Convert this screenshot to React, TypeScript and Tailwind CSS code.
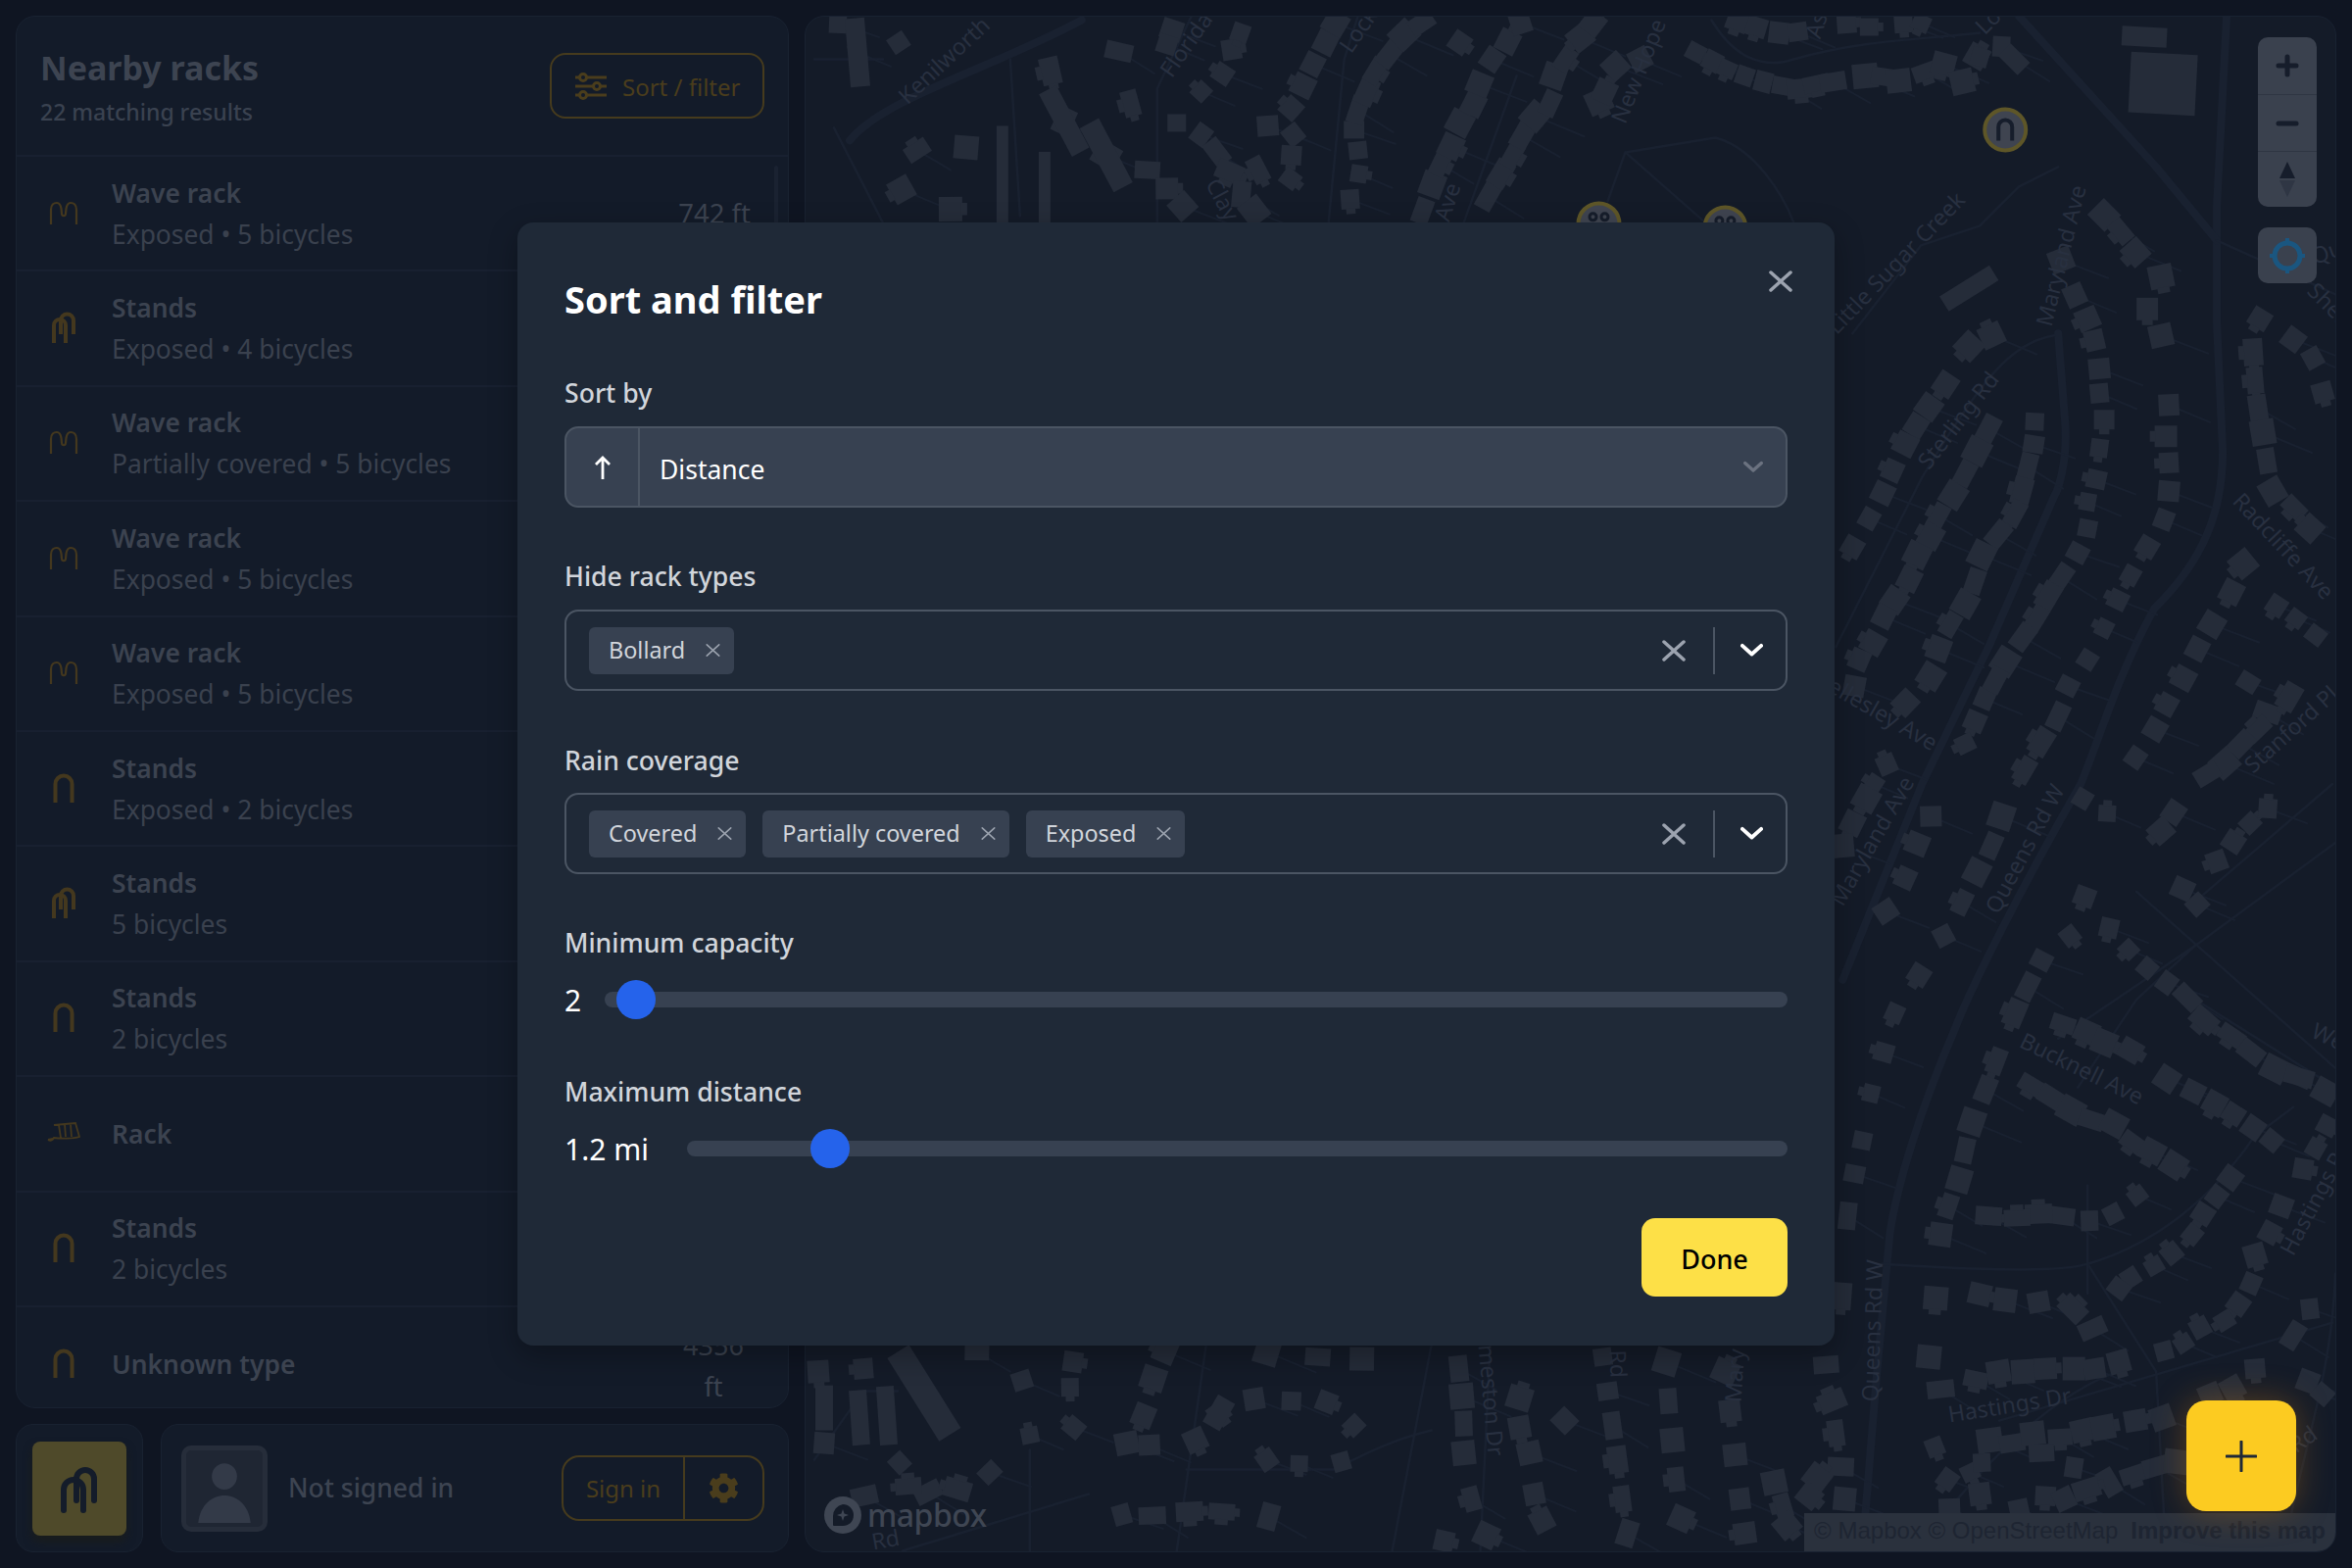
import { FaCog } from "react-icons/fa";

type RackKind = "wave" | "double" | "single" | "rack";

const racks: { kind: RackKind; title: string; sub?: string }[] = [
  { kind: "wave", title: "Wave rack", sub: "Exposed • 5 bicycles" },
  { kind: "double", title: "Stands", sub: "Exposed • 4 bicycles" },
  { kind: "wave", title: "Wave rack", sub: "Partially covered • 5 bicycles" },
  { kind: "wave", title: "Wave rack", sub: "Exposed • 5 bicycles" },
  { kind: "wave", title: "Wave rack", sub: "Exposed • 5 bicycles" },
  { kind: "single", title: "Stands", sub: "Exposed • 2 bicycles" },
  { kind: "double", title: "Stands", sub: "5 bicycles" },
  { kind: "single", title: "Stands", sub: "2 bicycles" },
  { kind: "rack", title: "Rack" },
  { kind: "single", title: "Stands", sub: "2 bicycles" },
  { kind: "single", title: "Unknown type" },
];

const RackIcon = ({ kind }: { kind: RackKind }) => (
  <svg viewBox="0 0 36 36" width="36" height="36" fill="none" stroke="#44381e" strokeWidth="4">
    {kind === "single" && <path d="M9.5 32V13a8.5 8.5 0 0 1 17 0v19" />}
    {kind === "double" && (
      <>
        <path d="M28 24V10a6.5 6.5 0 0 0-13 0v14" />
        <path d="M8 33V15a6 6 0 0 1 12 0v18" />
      </>
    )}
    {kind === "wave" && (
      <path
        strokeWidth="2.200"
        d="M5 29V14C5 9 8 7 11 7C14 7 15 10 15.500 13L16 18C16.300 21 19.700 21 20 18L20.500 13C21 10 22 7 25 7C28 7 31 9 31 14V29"
      />
    )}
    {kind === "rack" && (
      <path
        strokeWidth="1.800"
        d="M8 9l22-2 4 14c-6 2-20 2-26 1-1 2-3 4-6 2M13 9l2 13M19 8l1 13M25 8l1 13M2 24l5-1"
      />
    )}
  </svg>
);

// x, y pairs in page coordinates, one array per row of houses
const houseRows: number[][] = [
  [874, 53, 916, 43, 854, 23, 1141, 52, 1071, 72, 1153, 105, 1085, 123, 1128, 158, 1170, 173, 985, 150, 935, 153, 919, 193, 969, 213, 1190, 192, 1206, 210],
  [1195, 30, 1190, 45, 1256, 50, 1265, 33, 1247, 75, 1225, 93, 1200, 125, 1225, 137, 1241, 155, 1254, 175, 1283, 173, 1266, 198, 1279, 215],
  [1352, 43, 1362, 23, 1339, 65, 1329, 87, 1317, 110, 1293, 128, 1319, 137, 1317, 158, 1316, 182, 1377, 203, 1386, 177, 1385, 153, 1381, 132, 1385, 112, 1394, 93, 1403, 72, 1417, 55, 1432, 35, 1450, 23],
  [1451, 215, 1461, 188, 1469, 167, 1480, 149, 1489, 125, 1503, 106, 1509, 85, 1522, 60, 1538, 42, 1489, 43, 1551, 23],
  [1518, 200, 1531, 177, 1543, 158, 1553, 138, 1566, 118, 1581, 105, 1585, 77, 1597, 60, 1612, 38, 1631, 103, 1637, 93, 1648, 67, 1673, 60, 1625, 23],
  [1730, 53, 1747, 62, 1762, 70, 1780, 77, 1799, 83, 1822, 88, 1837, 90, 1853, 85, 1870, 83, 1903, 77, 1922, 78, 1937, 82, 1964, 73, 1983, 65, 2002, 83, 2017, 57],
  [1773, 20, 1792, 27, 1815, 33, 1834, 32, 1884, 23, 1907, 27, 1942, 23, 1960, 23, 2020, 58, 2042, 47, 2055, 60],
  [2032, 342, 2009, 353, 1985, 392, 1968, 415, 1955, 434, 1944, 453, 1931, 480, 1921, 503, 1907, 529, 1890, 558],
  [2029, 437, 2017, 460, 2005, 483, 1993, 505, 1978, 526, 1970, 547, 1956, 566, 1948, 591, 1933, 612, 1922, 629, 1911, 656, 1897, 673, 1892, 700],
  [2076, 430, 2075, 453, 2069, 476, 2063, 501, 2056, 524, 2039, 545, 2022, 566, 2015, 593, 2005, 616, 1990, 637, 1978, 662, 1970, 690, 1944, 717],
  [2025, 713, 2015, 736, 2005, 759, 1925, 780, 1912, 800],
  [2103, 265, 2117, 301, 2130, 325, 2137, 347, 2142, 376, 2142, 401, 2147, 428, 2142, 457, 2139, 489, 2130, 512, 2130, 539, 2120, 564, 2103, 589, 2090, 608, 2078, 631, 2064, 650, 2046, 675, 2036, 694],
  [2147, 219, 2164, 236, 2179, 257, 2205, 282, 2191, 315, 2205, 342, 2213, 413, 2210, 445, 2213, 472, 2213, 501, 2208, 530, 2191, 558, 2174, 587, 2161, 612, 2147, 641, 2130, 673, 2110, 700, 2100, 731, 2083, 757, 2066, 786],
  [2299, 359, 2301, 388, 2304, 416, 2309, 441, 2313, 470, 2319, 501, 2341, 518, 2357, 539, 2289, 575, 2277, 604, 2257, 637, 2242, 662, 2228, 692, 2211, 719, 2199, 744, 2179, 773],
  [2323, 618, 2343, 631, 2363, 648, 2294, 696, 2314, 727, 2336, 711, 2304, 744, 2287, 759, 2270, 779, 2252, 790],
  [2306, 325, 2340, 346, 2360, 365, 2370, 400],
  [1904, 815, 1890, 840, 1880, 863, 1970, 833, 1956, 861, 1944, 896, 1924, 930, 1983, 955, 1958, 995, 1933, 1034, 1922, 1074, 1909, 1116, 1900, 1164, 1892, 1198, 1885, 1241, 1879, 1323],
  [2042, 833, 2032, 863, 2017, 890, 2002, 921],
  [2083, 980, 2069, 1007, 2056, 1034, 2037, 1083, 2026, 1112, 2012, 1145, 2005, 1174, 1999, 1204, 1988, 1231, 1980, 1260, 1975, 1325],
  [2127, 915, 2112, 955, 2152, 947, 2172, 969, 2191, 988, 2211, 1003, 2232, 1018, 2249, 1041, 2277, 1057, 2297, 1074, 2321, 1091, 2346, 1099, 2373, 1114],
  [2218, 829, 2205, 848, 2262, 879, 2227, 907, 2242, 923, 2279, 859, 2296, 840, 2314, 825, 2150, 830, 2125, 815],
  [2105, 1045, 2129, 1053, 2147, 1064, 2174, 1072, 2211, 1101, 2238, 1114, 2260, 1126, 2279, 1137, 2299, 1151, 2318, 1164, 2350, 1193, 2363, 1172, 2375, 1149],
  [2073, 1108, 2093, 1120, 2113, 1133, 2134, 1143, 2157, 1147, 2176, 1166, 2196, 1175, 2218, 1189],
  [2181, 1220, 2156, 1239, 2132, 1246, 2103, 1241, 2080, 1239, 2058, 1243, 2029, 1241],
  [2276, 1202, 2262, 1221, 2248, 1239, 2237, 1260, 2216, 1279, 2198, 1292, 2174, 1304, 2162, 1315, 2135, 1356, 2115, 1336],
  [2020, 1321, 2046, 1327, 2080, 1329, 2301, 1281, 2316, 1258, 2328, 1231, 2297, 1310, 2284, 1331, 2270, 1348, 2245, 1355, 2228, 1371, 2208, 1379, 2357, 1336, 2340, 1363],
  [1863, 1393, 1968, 1385, 2016, 1408, 2039, 1400, 2064, 1400, 2087, 1397, 2116, 1397, 2137, 1397, 2162, 1390],
  [1980, 1418, 1869, 1430, 1873, 1463, 1878, 1497, 2030, 1470, 2053, 1473, 2074, 1463, 2102, 1467, 2125, 1460, 2146, 1457, 2179, 1450, 2206, 1447, 2255, 1423, 2278, 1417, 2301, 1397, 2355, 1410, 2370, 1423],
  [1974, 1477, 1987, 1510, 2010, 1503, 2022, 1493, 2116, 1498, 2152, 1513, 2129, 1520, 2177, 1505, 2200, 1497, 2221, 1492, 2083, 1483, 1810, 1513, 1819, 1537, 1823, 1557, 1854, 1508, 1846, 1527, 1882, 1530, 1989, 1540, 2020, 1525, 2087, 1527, 2106, 1530, 2060, 1540],
  [834, 1400, 880, 1397, 840, 1473, 1042, 1409, 1094, 1390, 1091, 1416, 1095, 1457, 1050, 1465, 917, 1493, 1009, 1503, 946, 1523, 976, 1520, 926, 1517, 881, 1527],
  [1188, 1379, 1176, 1407, 1166, 1445, 1149, 1473, 1172, 1475, 1219, 1470, 1243, 1442, 1279, 1428, 1317, 1430, 1353, 1431, 1381, 1455, 1292, 1490, 1325, 1494, 1368, 1492, 1144, 1546, 1175, 1547, 1213, 1543, 1246, 1543, 1294, 1548, 1292, 1380, 1344, 1385, 1389, 1387, 996, 1380],
  [1488, 1397, 1491, 1425, 1493, 1453, 1493, 1483, 1501, 1530, 1516, 1567, 1550, 1427, 1550, 1457, 1560, 1483, 1565, 1525, 1573, 1552, 1473, 1573, 1596, 1450],
  [1635, 1385, 1640, 1420, 1645, 1455, 1650, 1490, 1655, 1530, 1660, 1565, 1700, 1390, 1702, 1430, 1706, 1470, 1710, 1510, 1715, 1550, 1760, 1400, 1765, 1440, 1770, 1485, 1775, 1530, 1780, 1565],
];

// tilted long blocks: x, y, w, h, angle
const longBlocks: number[][] = [
  [874, 53, 20, 70, -5], [1085, 123, 20, 72, -28], [1128, 158, 22, 74, -28], [1022, 178, 12, 100, 0], [1065, 192, 12, 75, 0],
  [942, 1422, 26, 100, -32], [840, 1437, 18, 46, 0], [876, 1447, 18, 56, -4], [904, 1445, 18, 60, -4], [1243, 1442, 20, 32, 30],
  [2207, 85, 68, 62, 3], [2188, 37, 46, 20, 3], [2009, 294, 60, 18, -32], [2346, 1099, 30, 18, 15],
];

const housePts = houseRows.flatMap((row, r) => {
  const out: { x: number; y: number; a: number; w: number; h: number; seed: number }[] = [];
  for (let i = 0; i < row.length; i += 2) {
    const prevX = row[Math.max(0, i - 2)];
    const prevY = row[Math.max(1, i - 1)];
    const nextX = row[Math.min(row.length - 2, i + 2)];
    const nextY = row[Math.min(row.length - 1, i + 3)];
    const seed = (r * 37 + i * 17) % 23;
    out.push({
      x: row[i],
      y: row[i + 1],
      a: (Math.atan2(nextY - prevY, nextX - prevX) * 180) / Math.PI,
      w: 18 + (seed % 11),
      h: 17 + (seed % 9),
      seed,
    });
  }
  return out;
});

const majorRoads = [
  "M2272 16L2262 210L2262 330L2268 460C2268 520 2250 570 2198 621C2160 690 2140 760 2123 800C2060 910 2010 1010 1995 1049C1960 1130 1935 1210 1928 1260L1915 1400L1900 1583",
  "M2060 16L2200 170L2262 245",
  "M866 143C900 100 1010 70 1103 20",
  "M2100 340L2107 430C2110 470 2100 500 2096 506L2029 660L1961 800L1880 1000",
];

const thinRoads = [
  "M1355 227L1371 60L1385 16M1547 77L1493 227M1746 20C1770 60 1800 70 1830 60C1900 40 1960 40 2020 33",
  "M1658 155L1750 140C1790 150 1820 200 1830 227M1658 155L1640 205M1658 155L1740 227",
  "M1180 227L1180 90L1215 16M1040 220L1030 60M830 60L900 60M850 130L900 227",
  "M1890 340L1960 250L2020 230L2060 190L2100 170M2262 245L2383 300",
  "M2120 1110L2180 1020L2240 965L2383 860M2180 910L2383 1090M2240 1020L2383 1110M2240 965L2100 1060",
  "M1920 1290C2000 1295 2100 1300 2130 1290C2200 1270 2260 1220 2300 1160L2340 1130",
  "M2130 1290L2200 1400L2210 1583M1960 1580C2000 1520 2080 1430 2160 1400M2380 800L2240 920",
  "M2330 1583C2350 1480 2380 1400 2383 1300M2130 1320L2130 1210",
  "M1200 1583L1230 1373M1210 1500L1360 1500C1400 1480 1420 1470 1460 1460M1420 1583L1460 1373M1510 1583L1520 1373",
  "M920 1583L1110 1525M1050 1583L1050 1480M830 1490L880 1420L915 1420",
  "M2040 1450L2380 1350",
  "M1961 487L1873 660M2096 342C2050 350 2020 390 1961 487",
];

const mapLabels: [string, number, number, number][] = [
  ["Kenilworth", 925, 107, -43],
  ["Florida", 1195, 80, -55],
  ["Lock", 1378, 55, -55],
  ["Clay", 1229, 187, 62],
  ["Ave", 1478, 227, -72],
  ["New Hope Rd", 1658, 127, -68],
  ["As", 1857, 40, -72],
  ["Lo", 2025, 36, -45],
  ["Little Sugar Creek", 1874, 342, -46],
  ["Maryland Ave", 2093, 334, -76],
  ["Sterling Rd", 1968, 480, -52],
  ["Radcliffe Ave", 2277, 512, 47],
  ["Wellesley Ave", 1845, 694, 30],
  ["Stanford Pl", 2299, 790, -42],
  ["Sherwood", 2353, 298, 45],
  ["Queens", 2362, 270, -20],
  ["Maryland Ave", 1880, 926, -60],
  ["Queens Rd W", 2039, 934, -62],
  ["Bucknell Ave", 2059, 1068, 26],
  ["Queens Rd W", 1916, 1431, -88],
  ["Hastings Rd", 2340, 1283, -62],
  ["Hastings Dr", 1989, 1452, -9],
  ["West", 2357, 1058, 25],
  ["Rd", 2343, 1484, -35],
  ["meston Dr", 1508, 1373, 85],
  ["Rd", 1642, 1378, 88],
  ["Mary", 1776, 1432, -86],
  ["Rd", 890, 1582, -10],
];

const MapDrawing = () => (
  <svg viewBox="821 17 1562 1566" className="absolute inset-0 w-full h-full">
    <g fill="none" stroke="#192130" strokeLinecap="round" strokeLinejoin="round">
      {majorRoads.map((d, i) => (
        <path key={i} d={d} strokeWidth="8" />
      ))}
      {thinRoads.map((d, i) => (
        <path key={i} d={d} strokeWidth="2.500" />
      ))}
      {housePts
        .filter((p) => p.seed % 2 === 0)
        .map((p, i) => (
          <path key={i} d={`M${p.x} ${p.y}l${p.h * 2} ${p.w * 0.8}`} strokeWidth="2" />
        ))}
    </g>
    <g fill="#252c39">
      {housePts.map((p, i) => (
        <g key={i} transform={`translate(${p.x} ${p.y}) rotate(${p.a})`}>
          <rect x={-p.w / 2} y={-p.h / 2} width={p.w} height={p.h} />
          {p.seed % 3 === 0 && <rect x={-p.w / 4} y={p.h / 2 - 1} width={p.w / 2} height={6} />}
          {p.seed % 4 === 1 && <rect x={p.w / 2 - 1} y={-p.h / 4} width={6} height={p.h / 2} />}
        </g>
      ))}
      {longBlocks.map(([x, y, w, h, a], i) => (
        <rect key={i} x={-w / 2} y={-h / 2} width={w} height={h} transform={`translate(${x} ${y}) rotate(${a})`} />
      ))}
    </g>
    <g fill="#283040" fontSize="23" style={{ fontFamily: "'Noto Sans', sans-serif" }}>
      {mapLabels.map(([text, x, y, a], i) => (
        <text key={i} transform={`translate(${x} ${y}) rotate(${a})`}>
          {text}
        </text>
      ))}
    </g>
    {/* rack pins */}
    <g>
      <circle cx="2046" cy="132" r="21" fill="#3f4450" stroke="#5e5628" strokeWidth="4" />
      <path d="M2039 143v-14a7 7 0 0 1 14 0v14" fill="none" stroke="#161d2b" strokeWidth="4" />
    </g>
    {[[1631, 228], [1760, 232]].map(([x, y], i) => (
      <g key={i}>
        <circle cx={x} cy={y} r="21" fill="#3f4450" stroke="#5e5628" strokeWidth="4" />
        <circle cx={x - 6} cy={y - 7} r="3.500" fill="none" stroke="#161d2b" strokeWidth="3" />
        <circle cx={x + 6} cy={y - 7} r="3.500" fill="none" stroke="#161d2b" strokeWidth="3" />
      </g>
    ))}
  </svg>
);

const Cross = ({ size = 24, weight = 3, color = "#9ca3af" }: { size?: number; weight?: number; color?: string }) => (
  <svg viewBox="0 0 24 24" width={size} height={size} fill="none" stroke={color} strokeWidth={weight} strokeLinecap="round">
    <path d="M2 3l20 18M22 3L2 21" />
  </svg>
);

const Chevron = ({ size = 23, color = "#ffffff" }: { size?: number; color?: string }) => (
  <svg viewBox="0 0 24 16" width={size} height={(size * 2) / 3} fill="none" stroke={color} strokeWidth="4" strokeLinecap="round" strokeLinejoin="round">
    <path d="M2 3l10 9 10-9" />
  </svg>
);

const Chip = ({ label }: { label: string }) => (
  <div className="flex items-center h-12 rounded-md bg-[#374151] pl-[20px] pr-[14px] text-[23.400px] text-[#d1d5db]">
    <span className="pt-[1px]">{label}</span>
    <span className="ml-[21px]">
      <Cross size={15} weight={2.500} />
    </span>
  </div>
);

const MultiSelect = ({ chips }: { chips: string[] }) => (
  <div className="flex items-center h-[83px] rounded-[14px] border-2 border-[#4b5563] pl-[23px] pr-[23px]">
    <div className="flex flex-1 gap-[17px]">
      {chips.map((chip) => (
        <Chip key={chip} label={chip} />
      ))}
    </div>
    <Cross size={24} weight={3.500} />
    <div className="ml-[28px] mr-[26px] h-12 w-[2px] bg-[#4b5563]" />
    <Chevron />
  </div>
);

const Label = ({ children, className }: { children: string; className: string }) => (
  <div className={`text-[26.600px] leading-[36px] font-medium text-[#d1d5db] ${className}`}>{children}</div>
);

export default function App() {
  return (
    <div
      className="relative flex w-[2400px] h-[1600px] gap-4 p-4 bg-[#0f1522] overflow-hidden"
      style={{ fontFamily: "'Noto Sans', sans-serif" }}
    >
      {/* Sidebar */}
      <div className="flex flex-col w-[789px] shrink-0 gap-4">
        <div className="flex flex-col flex-1 min-h-0 overflow-hidden rounded-[20px] border border-[#192231] bg-[#131b29]">
          <div className="flex shrink-0 items-center justify-between h-[143px] px-[24px] border-b-2 border-[#182030]">
            <div>
              <div className="text-[34px] leading-[46px] font-bold text-[#3d4451]">Nearby racks</div>
              <div className="mt-[6px] text-[23px] leading-[32px] font-medium text-[#3a4250]">22 matching results</div>
            </div>
            <div className="flex items-center gap-[16px] w-[219px] h-[67px] pl-[24px] rounded-[16px] border-2 border-[#463b1d] text-[24px] text-[#4a3d1c]">
              <svg viewBox="0 0 32 28" width="32" height="28" fill="none" stroke="#4a3d1c" strokeWidth="3">
                <path d="M0 5h4M12 5h20M0 14h18M26 14h6M0 23h4M12 23h20" />
                <circle cx="8" cy="5" r="3.500" />
                <circle cx="22" cy="14" r="3.500" />
                <circle cx="8" cy="23" r="3.500" />
              </svg>
              <span className="pt-[2px]">Sort / filter</span>
            </div>
          </div>
          <div className="relative">
            {racks.map((rack, index) => (
              <div
                key={index}
                className="flex items-center h-[117.400px] pl-[30px] pr-[38px] border-b-2 border-[#182030] shrink-0"
              >
                <div className="flex w-[36px] h-[36px] shrink-0">
                  <RackIcon kind={rack.kind} />
                </div>
                <div className="ml-[31px] flex-1">
                  <div className="text-[26.400px] leading-[42px] font-semibold text-[#3c4350]">{rack.title}</div>
                  {rack.sub && <div className="text-[26.400px] leading-[42px] text-[#3a414e]">{rack.sub}</div>}
                </div>
                {index === 0 && <div className="text-[27.500px] text-[#3c4350]">742 ft</div>}
                {index === 10 && (
                  <div className="w-[70px] mr-[3px] text-center text-[27px] leading-[42px] text-[#3c4350] relative top-[2px]">
                    4356 ft
                  </div>
                )}
              </div>
            ))}
            <div className="absolute right-[10px] top-[9px] h-[300px] w-[4px] rounded-full bg-[#1a2231]" />
          </div>
        </div>
        <div className="flex shrink-0 h-[131px] gap-[18px]">
          <div className="flex items-center justify-center w-[130px] rounded-[18px] border border-[#192231] bg-[#131b29]">
            <div className="flex items-center justify-center w-[96px] h-[96px] rounded-[8px] bg-[#4f4a2a] shadow-[0_6px_10px_rgba(30,30,20,0.6)]">
              <svg viewBox="0 -3 44 50" width="44" height="50" fill="none" stroke="#141c2a" strokeWidth="6" strokeLinecap="round">
                <path d="M37 34V12a9 9 0 0 0-18 0v22" />
                <path d="M6 44V23a10 10 0 0 1 20 0v21" />
              </svg>
            </div>
          </div>
          <div className="flex flex-1 items-center rounded-[18px] border border-[#192231] bg-[#131b29] pl-[20px] pr-[24px]">
            <div className="flex items-end justify-center w-[88px] h-[88px] rounded-[10px] border-[5px] border-[#262d3a] bg-[#1f2633]">
              <svg viewBox="0 0 60 70" width="62" height="72" fill="#333a48">
                <ellipse cx="30" cy="20" rx="12.500" ry="13" />
                <path d="M4 66c2-18 14-27 26-27s24 9 26 27z" />
              </svg>
            </div>
            <div className="ml-[21px] flex-1 text-[26.500px] font-medium text-[#3d4451]">Not signed in</div>
            <div className="flex items-center h-[67px] rounded-[18px] border-2 border-[#463b1d] text-[24px] text-[#4a3d1c]">
              <div className="flex items-center justify-center w-[122px] h-full">Sign in</div>
              <div className="flex items-center justify-center w-[81px] h-full border-l-2 border-[#463b1d]">
                <FaCog size={31} color="#4a3d1c" />
              </div>
            </div>
          </div>
        </div>
      </div>

      {/* Map */}
      <div className="relative flex-1 overflow-hidden rounded-[20px] border border-[#192231] bg-[#141b28]">
        <MapDrawing />
        <div className="absolute right-[19px] top-[21px] flex flex-col w-[60px] rounded-[10px] bg-[#3a414e]">
          <div className="flex items-center justify-center h-[58px]">
            <svg viewBox="0 0 24 24" width="24" height="24" stroke="#161d2b" strokeWidth="5" strokeLinecap="round">
              <path d="M3 12h18M12 3v18" />
            </svg>
          </div>
          <div className="flex items-center justify-center h-[58px] border-t border-[#2f3643]">
            <svg viewBox="0 0 24 24" width="24" height="24" stroke="#161d2b" strokeWidth="5" strokeLinecap="round">
              <path d="M3 12h18" />
            </svg>
          </div>
          <div className="flex items-center justify-center h-[57px] border-t border-[#2f3643]">
            <svg viewBox="0 0 16 36" width="16" height="36">
              <path d="M8 0l8 17H0z" fill="#161d2b" />
              <path d="M8 36l8-17H0z" fill="#2f3644" />
            </svg>
          </div>
        </div>
        <div className="absolute right-[19px] top-[215px] flex items-center justify-center w-[60px] h-[57px] rounded-[10px] bg-[#3a414e]">
          <svg viewBox="0 0 36 36" width="36" height="36" fill="none" stroke="#1a5680" strokeWidth="5">
            <circle cx="18" cy="18" r="13" />
            <path d="M18 0v5M18 31v5M0 18h5M31 18h5" strokeWidth="4" />
          </svg>
        </div>
        <div className="absolute left-[18px] bottom-[17px] flex items-center gap-[5px] text-[#3f4653]">
          <svg viewBox="0 0 40 40" width="40" height="40">
            <circle cx="20" cy="20" r="19" fill="#3f4653" />
            <path d="M20 9a11 11 0 0 1 11 11c0 7-5 11-11 11H11a1 1 0 0 1-1-1v-9A12 12 0 0 1 20 9z" fill="#141b28" />
            <path d="M20 14l1.500 4.500L26 20l-4.500 1.500L20 26l-1.500-4.500L14 20l4.500-1.500z" fill="#3f4653" />
          </svg>
          <span className="text-[32px] leading-[40px] font-medium tracking-[-0.5px]">mapbox</span>
        </div>
        <div
          className="absolute right-0 bottom-0 flex items-center gap-[13px] h-[39px] pl-[10px] pr-[10px] pb-[3px] bg-[#2a313d] text-[#1e2532] text-[24px]"
          style={{ fontFamily: "'Liberation Sans', sans-serif" }}
        >
          <span>© Mapbox © OpenStreetMap</span>
          <span className="font-bold">Improve this map</span>
        </div>
      </div>

      {/* Add rack button */}
      <div className="absolute left-[2231px] top-[1429px] flex items-center justify-center w-[112px] h-[113px] rounded-[20px] bg-[#fccb21] shadow-[0_0_34px_rgba(190,115,20,0.4)]">
        <svg viewBox="0 0 32 32" width="32" height="32" stroke="#1f2937" strokeWidth="3" strokeLinecap="round">
          <path d="M1 16h30M16 1v30" />
        </svg>
      </div>

      {/* Sort and filter dialog */}
      <div className="absolute left-[528px] top-[227px] w-[1344px] h-[1146px] rounded-[16px] bg-[#1f2937] px-[48px] pt-[54px] shadow-[0_10px_30px_rgba(0,0,0,0.3)]">
        <div className="absolute right-[43px] top-[48px]">
          <Cross size={24} weight={3.500} />
        </div>
        <div className="text-[38px] leading-[48px] font-bold text-white">Sort and filter</div>

        <Label className="mt-[54px]">Sort by</Label>
        <div className="mt-[16px] flex h-[83px] rounded-[14px] border-2 border-[#4b5563] bg-[#374151] text-[26.500px] text-white">
          <div className="flex items-center justify-center w-[75px] h-full border-r-2 border-[#4b5563]">
            <svg viewBox="0 0 18 24" width="18" height="24" fill="none" stroke="#ffffff" strokeWidth="2.800">
              <path d="M9 24V2M2 9l7-7 7 7" />
            </svg>
          </div>
          <div className="flex flex-1 items-center pl-[20px] pr-[23px]">
            <span className="flex-1 pt-[7px]">Distance</span>
            <Chevron size={20} color="#6b7280" />
          </div>
        </div>

        <Label className="mt-[52px]">Hide rack types</Label>
        <div className="mt-[16px]">
          <MultiSelect chips={["Bollard"]} />
        </div>

        <Label className="mt-[53px]">Rain coverage</Label>
        <div className="mt-[15px]">
          <MultiSelect chips={["Covered", "Partially covered", "Exposed"]} />
        </div>

        <Label className="mt-[52px]">Minimum capacity</Label>
        <div className="mt-[20px] flex items-center h-10">
          <div className="w-[41px] text-[30px] text-white">2</div>
          <div className="relative flex-1 h-4 rounded-full bg-[#374151]">
            <div className="absolute left-[12px] -top-[12px] w-10 h-10 rounded-full bg-[#2563eb]" />
          </div>
        </div>

        <Label className="mt-[56px]">Maximum distance</Label>
        <div className="mt-[20px] flex items-center h-10">
          <div className="w-[125px] text-[30px] text-white">1.2 mi</div>
          <div className="relative flex-1 h-4 rounded-full bg-[#374151]">
            <div className="absolute left-[126px] -top-[12px] w-10 h-10 rounded-full bg-[#2563eb]" />
          </div>
        </div>

        <div className="mt-[51px] flex justify-end">
          <div className="flex items-center justify-center w-[149px] h-[80px] rounded-[14px] bg-[#fde047] pt-[4px] text-[27px] font-medium text-black">
            Done
          </div>
        </div>
      </div>
    </div>
  );
}
